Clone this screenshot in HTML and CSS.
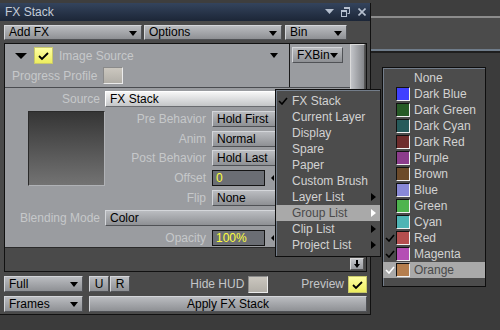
FILE: index.html
```html
<!DOCTYPE html>
<html lang="en">
<head>
    <meta charset="UTF-8">
    <title>FX Stack</title>
    <link rel="stylesheet" href="styles.css">
</head>
<body>
    <div class="window">
        <div class="titlebar">
            <span>FX Stack</span>
            <div class="tb-icons">
                <svg width="9" height="6" viewBox="0 0 9 6"><polygon points="0,0 9,0 4.5,5" fill="#b6c0cf"/></svg>
                <svg width="9" height="10" viewBox="0 0 9 10"><path d="M3.5 1.5h5v5h-2" fill="none" stroke="#b6c0cf"/><path d="M3 1h6" stroke="#b6c0cf" stroke-width="2"/><rect x="0.5" y="4.5" width="5" height="5" fill="none" stroke="#b6c0cf"/><path d="M0 4h6" stroke="#b6c0cf" stroke-width="2"/></svg>
                <svg width="8" height="8" viewBox="0 0 8 8"><path d="M0.5 0.5l7 7M7.5 0.5l-7 7" stroke="#b6c0cf" stroke-width="1.6"/></svg>
            </div>
        </div>

        <div class="toolbar">
            <div class="dd w-add">Add FX</div>
            <div class="dd w-opt">Options</div>
            <div class="dd w-bin">Bin</div>
        </div>

        <div class="stack">
            <div class="stack-main">
                <div class="layer">
                    <div class="layer-head">
                        <div class="head-main">
                            <div class="head-row">
                                <span class="tri-down"></span>
                                <span class="chk">
                                    <svg width="19" height="17" viewBox="0 0 19 17"><polyline points="5,9 8,12 14,6" fill="none" stroke="#000" stroke-width="1.8"/></svg>
                                </span>
                                <span class="name">Image Source</span>
                                <span class="tri-small"></span>
                            </div>
                            <div class="head-row row2">
                                <span class="lbl pp">Progress Profile</span>
                                <span class="box"></span>
                            </div>
                        </div>
                        <div class="head-bin">
                            <div class="dd fxbin">FXBin</div>
                        </div>
                    </div>

                    <div class="form">
                        <span class="lbl wide r1">Source</span>
                        <div class="dd light full r1">FX Stack</div>

                        <div class="thumb"></div>

                        <span class="lbl mid r2">Pre Behavior</span>
                        <div class="dd ctl r2">Hold First</div>

                        <span class="lbl mid r3">Anim</span>
                        <div class="dd ctl r3">Normal</div>

                        <span class="lbl mid r4">Post Behavior</span>
                        <div class="dd ctl r4">Hold Last</div>

                        <span class="lbl mid r5">Offset</span>
                        <div class="field-wrap r5"><span class="field">0</span></div>

                        <span class="lbl mid r6">Flip</span>
                        <div class="dd ctl r6">None</div>

                        <span class="lbl wide r7">Blending Mode</span>
                        <div class="dd full r7">Color</div>

                        <span class="lbl mid r8">Opacity</span>
                        <div class="field-wrap r8"><span class="field">100%</span></div>
                    </div>
                </div>
                <div class="empty"></div>
            </div>
            <div class="scroll">
                <div class="thumbbar"></div>
                <div class="down-btn">
                    <svg width="14" height="12" viewBox="0 0 14 12"><polygon points="6,2 8,2 8,6 10,6 7,10 4,6 6,6" fill="#000"/></svg>
                </div>
            </div>
        </div>

        <div class="bottom">
            <div class="brow">
                <div class="dd w-small">Full</div>
                <div class="btn sq first">U</div>
                <div class="btn sq">R</div>
                <div class="opt push">
                    <span>Hide HUD</span>
                    <span class="box"></span>
                </div>
                <div class="opt gap-l">
                    <span>Preview</span>
                    <span class="chk">
                        <svg width="19" height="17" viewBox="0 0 19 17"><polyline points="5,9 8,12 14,6" fill="none" stroke="#000" stroke-width="1.8"/></svg>
                    </span>
                </div>
            </div>
            <div class="brow">
                <div class="dd w-small">Frames</div>
                <div class="btn apply">Apply FX Stack</div>
            </div>
        </div>
    </div>

    <div class="menu src-menu">
        <div class="mi"><svg class="tick" width="10" height="8" viewBox="0 0 10 8"><polyline points="1,4 4,7 9,1" fill="none" stroke="#000" stroke-width="1.6"/></svg>FX Stack</div>
        <div class="mi">Current Layer</div>
        <div class="mi">Display</div>
        <div class="mi">Spare</div>
        <div class="mi">Paper</div>
        <div class="mi">Custom Brush</div>
        <div class="mi sub">Layer List</div>
        <div class="mi sub on">Group List</div>
        <div class="mi sub">Clip List</div>
        <div class="mi sub">Project List</div>
    </div>

    <div class="menu col-menu">
        <div class="ci"><span class="sw none"></span>None</div>
        <div class="ci"><span class="sw" style="background:#4040ff"></span>Dark Blue</div>
        <div class="ci"><span class="sw" style="background:#265a26"></span>Dark Green</div>
        <div class="ci"><span class="sw" style="background:#265a5a"></span>Dark Cyan</div>
        <div class="ci"><span class="sw" style="background:#6e2c2c"></span>Dark Red</div>
        <div class="ci"><span class="sw" style="background:#8c3c8c"></span>Purple</div>
        <div class="ci"><span class="sw" style="background:#6c4a2a"></span>Brown</div>
        <div class="ci"><span class="sw" style="background:#8888d6"></span>Blue</div>
        <div class="ci"><span class="sw" style="background:#4eb44e"></span>Green</div>
        <div class="ci"><span class="sw" style="background:#4eb4b4"></span>Cyan</div>
        <div class="ci"><svg class="tick" width="10" height="8" viewBox="0 0 10 8"><polyline points="1,4 4,7 9,1" fill="none" stroke="#000" stroke-width="1.6"/></svg><span class="sw" style="background:#b44e4e"></span>Red</div>
        <div class="ci"><svg class="tick" width="10" height="8" viewBox="0 0 10 8"><polyline points="1,4 4,7 9,1" fill="none" stroke="#000" stroke-width="1.6"/></svg><span class="sw" style="background:#b44eb4"></span>Magenta</div>
        <div class="ci on"><svg class="tick" width="10" height="8" viewBox="0 0 10 8"><polyline points="1,4 4,7 9,1" fill="none" stroke="#fff" stroke-width="1.6"/></svg><span class="sw" style="background:#b47e4e"></span>Orange</div>
    </div>
</body>
</html>
```

FILE: styles.css
```css
* {
    margin: 0;
    padding: 0;
    box-sizing: border-box;
}
body {
    width: 500px;
    height: 330px;
    overflow: hidden;
    position: relative;
    font-family: "Liberation Sans", Arial, sans-serif;
    font-size: 12px;
    background: linear-gradient(#3e3e3e 0 16px, #8c8c8c 16px 18px, #4b4b4b 18px 49px, #6f7c8a 49px 51px, #1e1e1e 51px 53px, #3b3b3b 53px);
}
.window {
    width: 371px;
    margin-top: 3px;
    background: #4a4a4a;
    border-right: 1px solid #111;
    border-bottom: 1px solid #111;
}
.titlebar {
    height: 18px;
    display: flex;
    align-items: center;
    padding-left: 5px;
    color: #c4ccd8;
    background: linear-gradient(#34445d, #1c2637);
}
.tb-icons {
    margin-left: auto;
    padding-right: 4px;
    display: flex;
    align-items: center;
}
.tb-icons svg:nth-child(2) { margin-left: 7px; }
.tb-icons svg:nth-child(3) { margin-left: 8px; }

/* toolbar */
.toolbar {
    display: flex;
    padding: 4px 4px 3px;
}
.dd, .btn {
    position: relative;
    height: 15px;
    line-height: 13px;
    color: #000;
    background: linear-gradient(#babcc0, #8e9094);
    border: 1px solid;
    border-color: #d4d6da #505256 #505256 #d4d6da;
    padding-left: 4px;
    white-space: nowrap;
    overflow: hidden;
}
.dd::after {
    content: "";
    position: absolute;
    right: 4px;
    top: 5px;
    border-left: 4.5px solid transparent;
    border-right: 4.5px solid transparent;
    border-top: 5px solid #000;
}
.w-add { width: 138px; }
.w-opt { width: 138px; margin-left: 2px; }
.w-bin { width: 62px; margin-left: 3px; }

/* fx list */
.stack {
    display: flex;
    height: 229px;
    margin: 0 3px 0 4px;
    border: 1px solid #111;
}
.stack-main {
    flex: 1;
    display: flex;
    flex-direction: column;
}
.layer {
    background: #9a9ca0;
    border-bottom: 1px solid #2a2a2a;
}
.layer-head {
    display: flex;
    height: 44px;
    border-bottom: 1px solid #4a4c50;
}
.head-main {
    width: 285px;
    border-right: 1px solid #1a1a1a;
    padding: 3px 0 0 5px;
}
.head-row {
    display: flex;
    align-items: center;
    height: 17px;
}
.head-row.row2 { margin-top: 3px; }
.tri-down {
    margin-left: 5px;
    border-left: 6px solid transparent;
    border-right: 6px solid transparent;
    border-top: 6px solid #000;
}
.chk {
    display: block;
    width: 19px;
    height: 17px;
    background: linear-gradient(#ffffa2, #eded5e);
    border: 1px solid #c9c96a;
}
.chk svg { display: block; margin: -1px; }
.head-row .chk { margin-left: 7px; }
.name {
    margin-left: 6px;
    color: #c6c8ca;
}
.tri-small {
    margin-left: auto;
    margin-right: 11px;
    border-left: 4.5px solid transparent;
    border-right: 4.5px solid transparent;
    border-top: 5px solid #000;
}
.lbl {
    color: #c6c8ca;
    line-height: 16px;
    white-space: nowrap;
}
.pp {
    width: 93px;
    padding-left: 2px;
}
.box {
    display: block;
    width: 20px;
    height: 17px;
    background: linear-gradient(#cbc7bf, #b1aea7);
    border: 1px solid;
    border-color: #8a8a8a #ececec #ececec #8a8a8a;
}
.head-bin {
    flex: 1;
    padding: 3px 0 0 2px;
}
.fxbin {
    width: 51px;
    height: 16px;
    line-height: 14px;
}

/* properties form */
.form {
    display: grid;
    grid-template-columns: 23px 77px 101px 6px 76px;
    grid-auto-rows: 16px;
    row-gap: 3.8px;
    padding-top: 3px;
    height: 159px;
}
.form .dd { height: 16px; line-height: 14px; }
.lbl.wide { grid-column: 1 / 3; text-align: right; padding-right: 5px; }
.lbl.mid { grid-column: 3; text-align: right; }
.full { grid-column: 3 / 6; }
.ctl, .field-wrap { grid-column: 5; }
.r1 { grid-row: 1; }
.r2 { grid-row: 2; }
.r3 { grid-row: 3; }
.r4 { grid-row: 4; }
.r5 { grid-row: 5; }
.r6 { grid-row: 6; }
.r7 { grid-row: 7; }
.r8 { grid-row: 8; }
.dd.light {
    background: linear-gradient(#f6f6f6, #c4c6c8);
    border-color: #ffffff #6a6c70 #6a6c70 #ffffff;
}
.thumb {
    grid-column: 2;
    grid-row: 2 / 6;
    background: linear-gradient(#353535, #737373);
    border: 1px solid;
    border-color: #2a2a2a #b0b2b6 #b0b2b6 #2a2a2a;
}
.field-wrap { position: relative; }
.field {
    display: block;
    width: 53px;
    height: 16px;
    line-height: 14px;
    padding-left: 3px;
    color: #ffff3c;
    background: #6b6e74;
    border: 1px solid #151515;
}
.field-wrap::after {
    content: "";
    position: absolute;
    left: 59px;
    top: 5px;
    border-top: 3px solid transparent;
    border-bottom: 3px solid transparent;
    border-right: 3px solid #000;
}
.empty {
    flex: 1;
    background: #4a4a4a;
}
.scroll {
    width: 16px;
    display: flex;
    flex-direction: column;
    background: #4a4a4a;
}
.thumbbar {
    flex: 1;
    margin-right: 1px;
    background: linear-gradient(90deg, #c2c4c8, #9c9ea2 60%, #84868a);
    border: 1px solid;
    border-color: #dadada #555 #555 #dadada;
}
.down-btn {
    width: 14px;
    height: 12px;
    margin: 4px 0 1px;
    background: linear-gradient(#c4c6ca, #9a9ca0);
    border: 1px solid;
    border-color: #dadada #555 #555 #dadada;
}
.down-btn svg { display: block; margin: -1px; }

/* bottom controls */
.bottom {
    display: flex;
    flex-direction: column;
    gap: 4px;
    padding: 4px 3px 2px 4px;
}
.brow {
    display: flex;
    align-items: center;
    height: 16px;
}
.brow .dd, .brow .btn { height: 16px; line-height: 14px; }
.w-small { width: 79px; }
.btn {
    text-align: center;
    padding-left: 0;
}
.sq { width: 20px; margin-left: 1px; }
.sq.first { margin-left: 6px; }
.apply {
    flex: 1;
    margin-left: 6px;
}
.opt {
    display: flex;
    align-items: center;
    gap: 4px;
    color: #c4c6c8;
}
.opt.push { margin-left: auto; }
.opt.gap-l { margin-left: 33px; }

/* popup menus */
.menu {
    position: absolute;
    background: #4c4c4c;
    border: 1px solid #0e0e0e;
    box-shadow: inset 1px 1px 0 #737d8a;
    color: #d2d2d2;
}
.src-menu {
    left: 275px;
    top: 89px;
    width: 106px;
    padding: 3px 0;
}
.col-menu {
    left: 382px;
    top: 67px;
    width: 104px;
    height: 220px;
    padding: 2px 0 0;
}
.mi, .ci {
    position: relative;
    height: 16px;
    line-height: 16px;
    white-space: nowrap;
}
.mi { padding-left: 16px; }
.ci {
    display: flex;
    align-items: center;
    padding-left: 13px;
}
.mi.on, .ci.on {
    background: #a9a9a9;
    color: #4a4a4a;
}
.tick {
    position: absolute;
    left: 2px;
    top: 4px;
}
.sub::after {
    content: "";
    position: absolute;
    right: 4px;
    top: 4px;
    border-top: 4px solid transparent;
    border-bottom: 4px solid transparent;
    border-left: 5px solid #000;
}
.sub.on::after { border-left-color: #fff; }
.sw {
    width: 14px;
    height: 14px;
    margin-right: 4px;
    border: 1px solid;
    border-color: #111 #f0f0f0 #f0f0f0 #111;
}
.sw.none { border: none; }
```
